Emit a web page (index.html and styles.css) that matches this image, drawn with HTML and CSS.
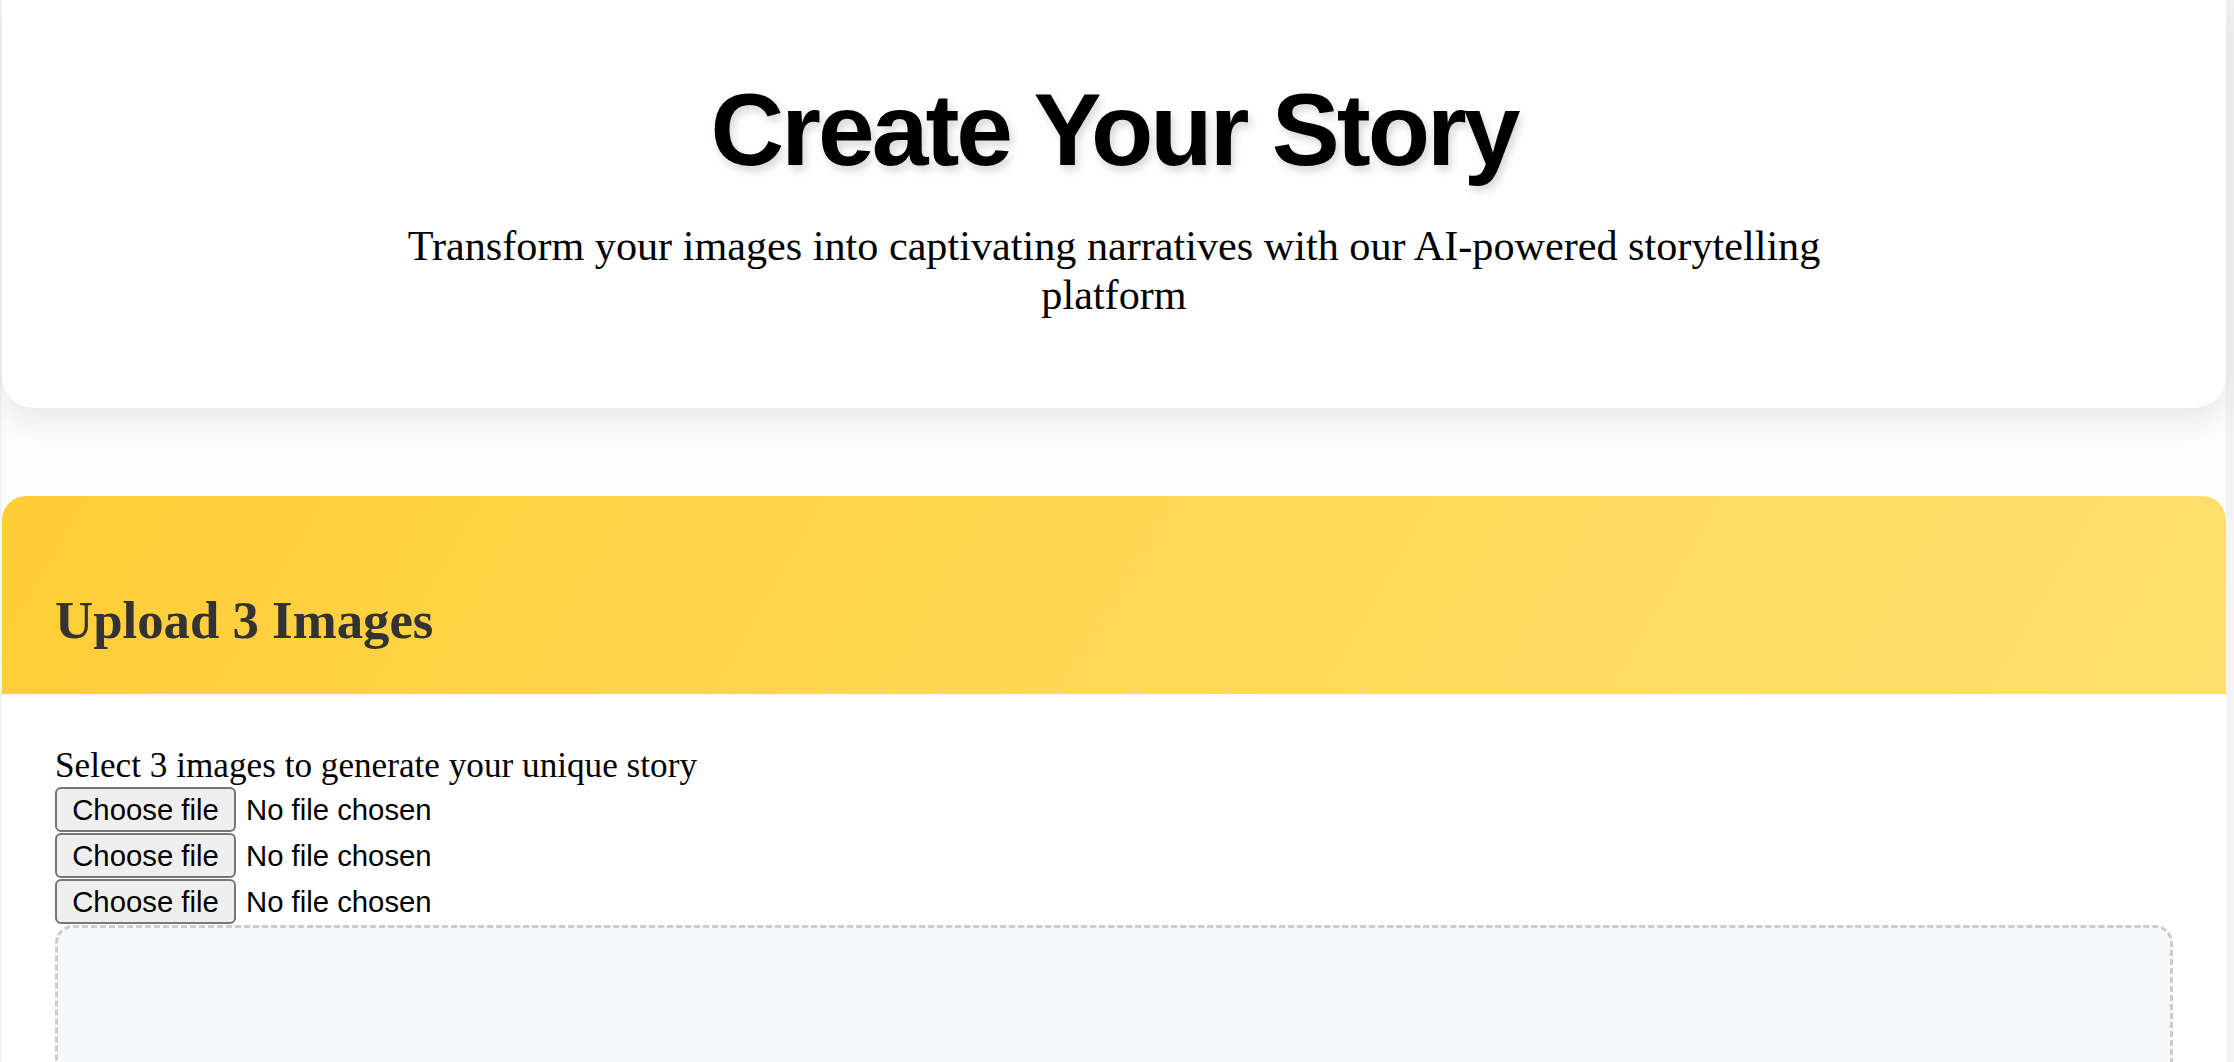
FILE: index.html
```html
<!DOCTYPE html>
<html lang="en">
<head>
<meta charset="utf-8">
<title>Create Your Story</title>
<link rel="stylesheet" href="styles.css">
</head>
<body>
<div class="page">
  <header class="hero">
    <h1 class="hero-title">Create Your Story</h1>
    <p class="hero-sub">Transform your images into captivating narratives with our AI-powered storytelling platform</p>
  </header>

  <section class="upload-card">
    <div class="upload-head">
      <h2 class="upload-title">Upload 3 Images</h2>
    </div>
    <div class="upload-body">
      <div class="upload-hint">Select 3 images to generate your unique story</div>
      <label class="file-field">
        <span class="file-btn">Choose file</span><span class="file-name">No file chosen</span>
        <input class="file-input" type="file" accept="image/*">
      </label>
      <label class="file-field">
        <span class="file-btn">Choose file</span><span class="file-name">No file chosen</span>
        <input class="file-input" type="file" accept="image/*">
      </label>
      <label class="file-field">
        <span class="file-btn">Choose file</span><span class="file-name">No file chosen</span>
        <input class="file-input" type="file" accept="image/*">
      </label>
      <div class="preview-box"></div>
    </div>
  </section>
</div>
</body>
</html>
```

FILE: styles.css
```css
html, body {
  margin: 0;
  padding: 0;
}

body {
  background: #f3f3f3;
  font-family: "Liberation Serif", "Times New Roman", serif;
  font-size: 35.2px;
  color: #000;
  overflow: hidden;
}

.page {
  margin: 0 8px 0 2px;
  background: #fdfdfd;
  min-height: 1062px;
}

.hero {
  background: #fff;
  border-radius: 0 0 32px 32px;
  box-shadow: 0 12px 34px rgba(0, 0, 0, 0.09);
  padding: 72px 44px 89px;
  text-align: center;
}

.hero-title {
  margin: 0 0 33px;
  font-family: "Liberation Sans", Arial, sans-serif;
  font-weight: 700;
  font-size: 102px;
  letter-spacing: -3px;
  line-height: 117px;
  color: #000;
  text-shadow: 3px 5px 9px rgba(0, 0, 0, 0.16);
}

.hero-sub {
  margin: 0 auto;
  max-width: 1540px;
  font-size: 42.2px;
  line-height: 48.5px;
}

.upload-card {
  margin-top: 88px;
  border-radius: 24px 24px 0 0;
  overflow: hidden;
  background: #fff;
}

.upload-head {
  background: linear-gradient(120deg, #ffcd36 0%, #ffd752 45%, #ffe06e 100%);
  padding: 94px 53px 43px;
}

.upload-title {
  margin: 0;
  font-size: 52.8px;
  line-height: 61px;
  font-weight: 700;
  color: #333;
}

.upload-body {
  padding: 52px 53px 0;
}

.upload-hint {
  line-height: 40.5px;
}

.file-field {
  display: flex;
  align-items: flex-start;
  height: 46.3px;
  font-family: "Liberation Sans", Arial, sans-serif;
  font-size: 29.3px;
  color: #000;
  cursor: pointer;
}

.file-btn {
  box-sizing: border-box;
  height: 45px;
  width: 181px;
  margin-right: 10px;
  border: 2px solid #767676;
  border-radius: 6px;
  background: #efefef;
  line-height: 41px;
  text-align: center;
}

.file-name {
  line-height: 45px;
}

.file-input {
  display: none;
}

.preview-box {
  height: 420px;
  border: 3px dashed #cdcdcd;
  border-radius: 18px;
  background: #f7f8fa;
}
```
